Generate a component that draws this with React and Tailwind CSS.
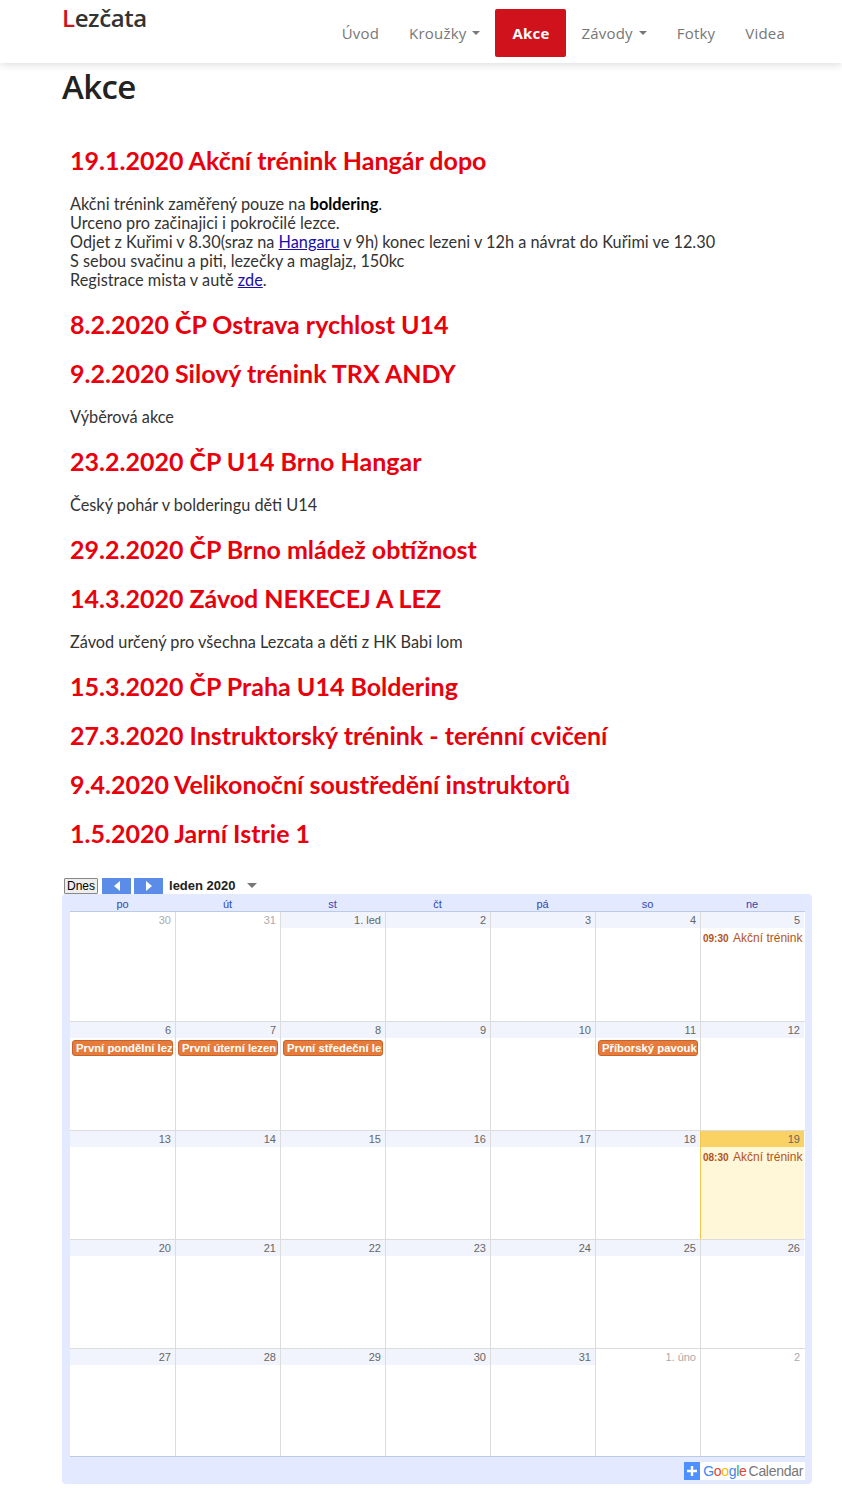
import React from "react";

const RED = "#e8000d";

const events = [
  { d: "19.1.2020 Akční trénink Hangár dopo", body: "first" },
  { d: "8.2.2020 ČP Ostrava rychlost U14" },
  { d: "9.2.2020 Silový trénink TRX ANDY", body: "Výběrová akce" },
  { d: "23.2.2020 ČP U14 Brno Hangar", body: "Český pohár v bolderingu děti U14" },
  { d: "29.2.2020 ČP Brno mládež obtížnost" },
  { d: "14.3.2020 Závod NEKECEJ A LEZ", body: "Závod určený pro všechna Lezcata a děti z HK Babi lom" },
  { d: "15.3.2020 ČP Praha U14 Boldering" },
  { d: "27.3.2020 Instruktorský trénink - terénní cvičení" },
  { d: "9.4.2020 Velikonoční soustředění instruktorů" },
  { d: "1.5.2020 Jarní Istrie 1" },
];

const weeks = [
  [
    { n: "30", o: true },
    { n: "31", o: true },
    { n: "1. led" },
    { n: "2" },
    { n: "3" },
    { n: "4" },
    { n: "5", t: { time: "09:30", text: "Akční trénink" } },
  ],
  [
    { n: "6", b: "První pondělní lezení" },
    { n: "7", b: "První úterní lezení" },
    { n: "8", b: "První středeční lezení" },
    { n: "9" },
    { n: "10" },
    { n: "11", b: "Příborský pavouk" },
    { n: "12" },
  ],
  [
    { n: "13" },
    { n: "14" },
    { n: "15" },
    { n: "16" },
    { n: "17" },
    { n: "18" },
    { n: "19", today: true, t: { time: "08:30", text: "Akční trénink" } },
  ],
  [
    { n: "20" },
    { n: "21" },
    { n: "22" },
    { n: "23" },
    { n: "24" },
    { n: "25" },
    { n: "26" },
  ],
  [
    { n: "27" },
    { n: "28" },
    { n: "29" },
    { n: "30" },
    { n: "31" },
    { n: "1. úno", o: true },
    { n: "2", o: true },
  ],
];

const days = ["po", "út", "st", "čt", "pá", "so", "ne"];

function Caret() {
  return (
    <span className="inline-block ml-[6px] align-middle w-0 h-0 border-l-[4px] border-r-[4px] border-t-[4px] border-l-transparent border-r-transparent border-t-[#777]" />
  );
}

function Nav() {
  return (
    <div className="w-full bg-white shadow-[0_2px_8px_rgba(0,0,0,0.13)] h-[63px] relative z-10">
      <div className="ml-[62px] w-[738px] flex justify-between items-start">
        <div className="pt-[3px] text-[24px] leading-[30px] font-semibold text-[#333] font-['Open_Sans',sans-serif] tracking-[-0.4px]">
          <span style={{ color: "#d0121c" }}>L</span>ezčata
        </div>
        <div className="flex items-start pt-[9px] font-['Open_Sans',sans-serif] text-[15px] tracking-[0.2px] text-[#777]">
          <div className="px-[15px] h-[48px] flex items-center">Úvod</div>
          <div className="px-[15px] h-[48px] flex items-center">Kroužky<Caret /></div>
          <div className="px-[17px] h-[48px] flex items-center bg-[#d0121c] text-white font-bold rounded-[2px]">Akce</div>
          <div className="px-[15px] h-[48px] flex items-center">Závody<Caret /></div>
          <div className="px-[15px] h-[48px] flex items-center">Fotky</div>
          <div className="px-[15px] h-[48px] flex items-center">Videa</div>
        </div>
      </div>
    </div>
  );
}

function FirstBody() {
  return (
    <div className="pt-[9px] pb-[11px] text-[16.3px] leading-[19px] text-[#333]">
      <div>Akčni trénink zaměřený pouze na <b className="text-black">boldering</b>.</div>
      <div>Urceno pro začinajici i pokročilé lezce.</div>
      <div>
        Odjet z Kuřimi v 8.30(sraz na <span className="text-[#1a0dab] underline">Hangaru</span> v 9h) konec lezeni v 12h a návrat do Kuřimi ve 12.30
      </div>
      <div>S sebou svačinu a piti, lezečky a maglajz, 150kc</div>
      <div>Registrace mista v autě <span className="text-[#1a0dab] underline">zde</span>.</div>
    </div>
  );
}

function Cell({ c, col }) {
  const stripBg = c.today ? "bg-[#fad163]" : c.o ? "bg-white" : "bg-[#f1f4fc]";
  const body = c.today ? "bg-[#fff7d7]" : "bg-white";
  return (
    <div
      className={`${body} ${col === 0 ? "" : "border-l"} ${c.today ? "border-l-[#f0c850]" : "border-l-[#dcdcdc]"} flex flex-col overflow-hidden`}
    >
      <div className={`${stripBg} h-[16px] text-right pr-[4px] text-[11px] leading-[16px] ${c.o ? "text-[#aaa]" : "text-[#666]"}`}>
        {c.n}
      </div>
      {c.t && (
        <div className="pl-[2px] pt-[1px] whitespace-nowrap text-[#b5521b] leading-[16px]">
          <span className="text-[10px] font-bold">{c.t.time}</span>{" "}
          <span className="text-[12px]">{c.t.text}</span>
        </div>
      )}
      {c.b && (
        <div className="mx-[2px] mt-[2px] h-[16px] bg-[#e67c3c] border border-[#c9632a] rounded-[3px] text-white font-bold text-[11.3px] leading-[14px] pl-[3px] whitespace-nowrap overflow-hidden">
          {c.b}
        </div>
      )}
    </div>
  );
}

function Calendar() {
  return (
    <div className="font-['Liberation_Sans',Arial,sans-serif]">
      <div className="flex items-center h-[17px] pl-[2px] gap-0">
        <div className="h-[16px] px-[2px] border border-[#888] bg-[#eee] text-[12px] leading-[14px] text-black rounded-[1px]">Dnes</div>
        <div className="ml-[4px] w-[29px] h-[16px] bg-[#5a8ce8] flex items-center justify-center">
          <span className="w-0 h-0 border-t-[5px] border-b-[5px] border-r-[6px] border-t-transparent border-b-transparent border-r-white" />
        </div>
        <div className="ml-[3px] w-[29px] h-[16px] bg-[#5a8ce8] flex items-center justify-center">
          <span className="w-0 h-0 border-t-[5px] border-b-[5px] border-l-[6px] border-t-transparent border-b-transparent border-l-white" />
        </div>
        <div className="ml-[6px] text-[13px] font-bold text-[#222]">leden 2020</div>
        <span className="ml-[11px] w-0 h-0 border-l-[5px] border-r-[5px] border-t-[5px] border-l-transparent border-r-transparent border-t-[#777]" />
      </div>
      <div className="w-[750px] bg-[#e3e9ff] rounded-[4px] pr-[7px] pl-[8px]">
        <div className="grid grid-cols-[105px_105px_105px_105px_105px_105px_104px] h-[17px] text-[11px] leading-[20px] text-[#3447b0] text-center">
          {days.map((d) => (
            <div key={d}>{d}</div>
          ))}
        </div>
        <div className="border-t border-[#bccbe8] bg-white">
          {weeks.map((w, i) => (
            <div
              key={i}
              className={`grid grid-cols-[105px_105px_105px_105px_105px_105px_104px] ${i < 4 ? "h-[109px]" : "h-[108px]"} ${i > 0 ? "border-t border-[#dcdcdc]" : ""}`}
            >
              {w.map((c, j) => (
                <Cell key={j} c={c} col={j} />
              ))}
            </div>
          ))}
        </div>
        <div className="h-[28px] border-t border-[#bccbe8] flex justify-end items-center">
          <div className="flex items-center bg-white h-[18px] pr-[2px]">
            <div className="w-[16px] h-[18px] bg-[#4d90fe] flex items-center justify-center">
              <svg width="12" height="12" viewBox="0 0 12 12">
                <path d="M6 1v10M1 6h10" stroke="white" strokeWidth="2.4" />
              </svg>
            </div>
            <div className="ml-[3px] text-[14px] leading-[18px] font-['Liberation_Sans',sans-serif] tracking-[-0.3px]">
              <span className="text-[#4285f4]">G</span>
              <span className="text-[#ea4335]">o</span>
              <span className="text-[#fbbc05]">o</span>
              <span className="text-[#4285f4]">g</span>
              <span className="text-[#34a853]">l</span>
              <span className="text-[#ea4335]">e</span>
              <span className="text-[#777] ml-[2px]">Calendar</span>
            </div>
          </div>
        </div>
      </div>
    </div>
  );
}

export default function App() {
  return (
    <div className="bg-white min-h-[1510px] font-['Lato',sans-serif]">
      <Nav />
      <div className="ml-[62px] w-[750px]">
        <h1 className="pt-[3px] text-[33px] leading-[42px] font-semibold text-[#222] font-['Open_Sans',sans-serif] tracking-[-0.6px]">Akce</h1>
        <div className="pt-[28px] pl-[8px] flex flex-col">
          {events.map((e, i) => (
            <React.Fragment key={i}>
              <h3 className="py-[10px] text-[25px] leading-[29px] font-bold" style={{ color: RED }}>
                {e.d}
              </h3>
              {e.body === "first" ? (
                <FirstBody />
              ) : e.body ? (
                <div className="pt-[9px] pb-[11px] text-[16.3px] leading-[19px] text-[#333]">{e.body}</div>
              ) : null}
            </React.Fragment>
          ))}
        </div>
        <div className="mt-[19px]">
          <Calendar />
        </div>
      </div>
    </div>
  );
}
